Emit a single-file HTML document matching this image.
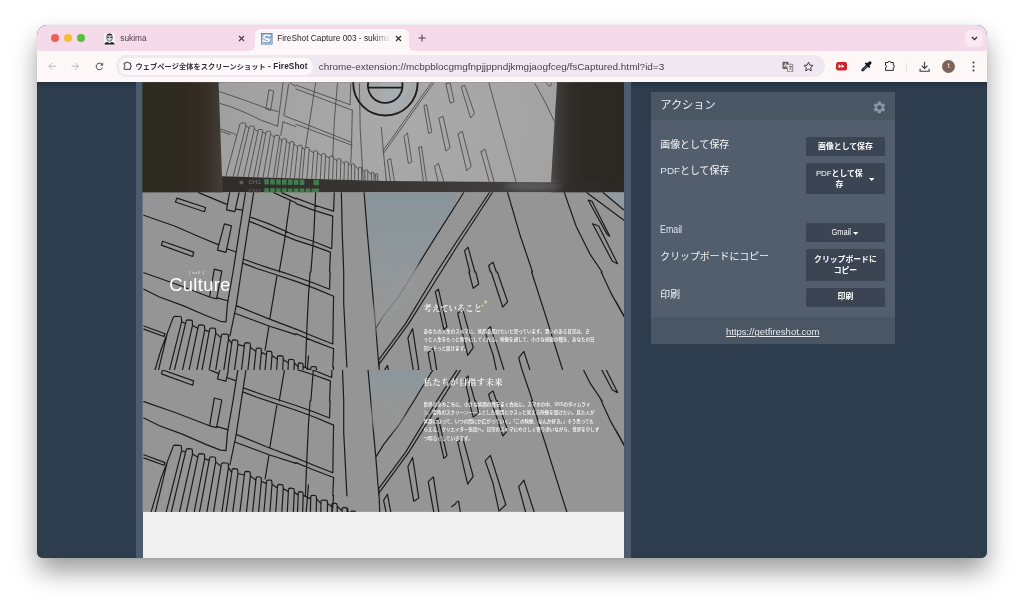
<!DOCTYPE html>
<html lang="ja">
<head>
<meta charset="utf-8">
<title>FireShot Capture 003 - sukima</title>
<style>
*{box-sizing:border-box;margin:0;padding:0}
html,body{width:1024px;height:607px;overflow:hidden;background:#fff;font-family:"Liberation Sans","Noto Sans CJK JP",sans-serif;}
#shadow{position:absolute;left:37px;top:24.5px;width:950px;height:533.5px;border-radius:10px 10px 6px 6px;box-shadow:0 14px 26px -1px rgba(0,0,0,.40),0 0 2px rgba(0,0,0,.10);}
#win{position:absolute;left:37px;top:24.5px;width:950px;height:533.5px;border-radius:10px 10px 6px 6px;background:#2e3d4e;overflow:hidden;}
#pg{position:absolute;left:-37px;top:-24.5px;width:1024px;height:607px;will-change:transform;}
#pg div,#pg span,#pg svg,#pg a{position:absolute;}
#tabs{left:0;top:24.5px;width:1024px;height:26.5px;background:#f5daea;}
#bar{left:0;top:51px;width:1024px;height:31.3px;background:#fdf7f7;}
#content{left:0;top:82.3px;width:1024px;height:476px;background:#2e3d4e;}
.t{white-space:nowrap;line-height:1;}
.lab{font-size:9.9px;color:#f4f5f7;}
.lat{font-weight:400;color:#dfe3e8}
.btn{left:806.3px;width:78.3px;background:#3b4452;border-radius:1.5px}
.bt{left:806.3px;width:78.3px;text-align:center;font-size:7.85px;font-weight:700;color:#fff}
.lat2{font-weight:400;}
.mh{font-family:"Liberation Serif","Noto Serif CJK SC","Noto Serif CJK JP",serif;font-size:8.35px;color:#fff;font-weight:600}
.mp{font-family:"Liberation Sans","Noto Sans CJK JP",sans-serif;font-size:4.52px;line-height:8.5px;color:#fff;white-space:nowrap;font-weight:500}
</style>
</head>
<body>
<div id="shadow"></div>
<div id="win"><div id="pg">
  <div id="tabs"></div>
  <div id="bar"></div>
  <div id="content"></div>
<div style="left:0;top:82.3px;width:1024px;height:7px;background:linear-gradient(rgba(0,0,0,.16),rgba(0,0,0,0))"></div>
  <!-- traffic lights -->
  <div style="left:50.8px;top:34.3px;width:8px;height:8px;border-radius:50%;background:#ee5e56"></div>
  <div style="left:64.2px;top:34.3px;width:8px;height:8px;border-radius:50%;background:#f6bd30"></div>
  <div style="left:77.4px;top:34.3px;width:8px;height:8px;border-radius:50%;background:#58bf3c"></div>
  <!-- tab 1 -->
  <svg style="left:104px;top:32.5px" width="11" height="12" viewBox="0 0 11 12">
    <rect x="0.3" y="0.3" width="10.4" height="11.2" fill="#fbf7f9"/>
    <path d="M2.8 3.2Q2.8 0.9 5.5 0.9Q8.2 0.9 8.2 3.2L8.2 5.6Q8.2 8.3 5.5 8.3Q2.8 8.3 2.8 5.6Z" fill="#d9d9d9" stroke="#333" stroke-width="0.7"/>
    <path d="M2.7 3.1Q2.9 0.8 5.5 0.8Q8.1 0.8 8.3 3.1L8 2.6Q5.5 1.8 3 2.6Z" fill="#222"/>
    <path d="M3.1 4.3H5.1M5.9 4.3H7.9" stroke="#222" stroke-width="1.1"/>
    <path d="M0.3 11.5Q0.5 9.4 3.3 9L5.5 10.2L7.7 9Q10.5 9.4 10.7 11.5Z" fill="#1c1c1c"/>
  </svg>
  <span class="t" style="left:120.3px;top:33.6px;font-size:8.3px;color:#4b3d47;">sukima</span>
  <svg style="left:238px;top:35px" width="7" height="7" viewBox="0 0 7 7"><path d="M1 1L6 6M6 1L1 6" stroke="#4a3c45" stroke-width="1.1" fill="none"/></svg>
  <!-- active tab -->
  <div style="left:255px;top:28.6px;width:154px;height:22.6px;background:#fdf7f7;border-radius:6px 6px 0 0"></div>
  <svg style="left:249px;top:45px" width="6" height="6" viewBox="0 0 6 6"><path d="M6 0V6H0A6 6 0 0 0 6 0Z" fill="#fdf7f7"/></svg>
  <svg style="left:409px;top:45px" width="6" height="6" viewBox="0 0 6 6"><path d="M0 0V6H6A6 6 0 0 1 0 0Z" fill="#fdf7f7"/></svg>
  <svg style="left:261px;top:33px" width="11.5" height="11.5" viewBox="0 0 23 23">
    <defs><linearGradient id="fsg" x1="0" x2="0" y1="0" y2="1"><stop offset="0" stop-color="#8fb0cf"/><stop offset="1" stop-color="#d6e5f1"/></linearGradient></defs>
    <rect x="0.8" y="0.8" width="21.4" height="21.4" fill="url(#fsg)" stroke="#4f7eae" stroke-width="1.6"/>
    <path d="M19.5 6.5C13 3.5 6 4.5 6 8.8C6 13.2 17 11.5 17 15C17 18 9 17.5 3.5 15.5" fill="none" stroke="#3f6f9f" stroke-width="4.2" transform="translate(0.8 1.2)"/>
    <path d="M19.5 6.5C13 3.5 6 4.5 6 8.8C6 13.2 17 11.5 17 15C17 18 9 17.5 3.5 15.5" fill="none" stroke="#fff" stroke-width="3.6"/>
  </svg>
  <span class="t" style="left:277.2px;top:33.6px;font-size:8.3px;color:#2f262b;width:113px;overflow:hidden;-webkit-mask-image:linear-gradient(90deg,#000 86%,transparent 100%);mask-image:linear-gradient(90deg,#000 86%,transparent 100%)">FireShot Capture 003 - sukima</span>
  <svg style="left:395.3px;top:35px" width="7" height="7" viewBox="0 0 7 7"><path d="M1 1L6 6M6 1L1 6" stroke="#2f262b" stroke-width="1.1" fill="none"/></svg>
  <svg style="left:418.3px;top:34.3px" width="8" height="8" viewBox="0 0 8 8"><path d="M4 0.5V7.5M0.5 4H7.5" stroke="#4a4046" stroke-width="1" fill="none"/></svg>
  <!-- tab search chevron -->
  <div style="left:965px;top:29.7px;width:18px;height:17.3px;border-radius:5px;background:#fae9f2"></div>
  <svg style="left:970.5px;top:35.5px" width="7" height="5" viewBox="0 0 7 5"><path d="M1 1L3.5 3.6L6 1" stroke="#2f262b" stroke-width="1.3" fill="none"/></svg>

  <!-- nav -->
  <svg style="left:48px;top:62.2px" width="8.4" height="8.4" viewBox="0 0 16 16"><path d="M15 8H2M8 1.5L1.5 8L8 14.5" stroke="#b7aeb3" stroke-width="1.7" fill="none"/></svg>
  <svg style="left:70.8px;top:62.2px" width="8.4" height="8.4" viewBox="0 0 16 16"><path d="M1 8H14M8 1.5L14.5 8L8 14.5" stroke="#b7aeb3" stroke-width="1.7" fill="none"/></svg>
  <svg style="left:94.6px;top:61.8px" width="9" height="9" viewBox="0 0 18 18"><path d="M15.2 11.2A6.6 6.6 0 1 1 13.6 4.2" stroke="#4a4247" stroke-width="2" fill="none"/><path d="M16.2 1V7H10.2Z" fill="#4a4247"/></svg>
  <!-- omnibox -->
  <div style="left:116.3px;top:55.4px;width:708.4px;height:21.8px;border-radius:10.9px;background:#f1e7f1"></div>
  <div style="left:118.5px;top:57.5px;width:194px;height:17.7px;border-radius:8.9px;background:#fdf8fa"></div>
  <svg style="left:122.7px;top:61.1px" width="9.6" height="9.6" viewBox="0 0 12 12"><path d="M1.5 2.5H4.1Q4.1 1.3 5.4 1.3Q6.7 1.3 6.7 2.5H9.3V5.4Q10.6 5.4 10.6 6.4Q10.6 7.4 9.3 7.4V10.4H1.5V7.6Q2.6 7.5 2.6 6.5Q2.6 5.5 1.5 5.4Z" stroke="#3a3237" stroke-width="1.2" fill="none"/></svg>
  <span class="t" style="left:135.6px;top:61.9px;font-size:7.2px;font-weight:700;color:#33292f;letter-spacing:.07px;" id="chiptxt">ウェブページ全体をスクリーンショット<span style="position:static;font-size:8.3px"> - FireShot</span></span>
  <span class="t" style="left:318.7px;top:62px;font-size:9.95px;color:#4a4046;" id="urltxt">chrome-extension://mcbpblocgmgfnpjjppndjkmgjaogfceg/fsCaptured.html?id=3</span>
  <!-- translate icon -->
  <svg style="left:782px;top:60.5px" width="11.5" height="11.5" viewBox="0 0 23 23">
    <path d="M1 1.5H13V16H1Z" fill="#6b6267"/>
    <path d="M9 6.5H21.5V21.5H11.5Z" fill="#fdf7f7" stroke="#6b6267" stroke-width="1.6"/>
    <path d="M4 12L7 4.5L10 12M5 9.8H9" stroke="#fdf7f7" stroke-width="1.5" fill="none"/>
    <path d="M13.5 11H20M16.7 9.5V11M18.8 11C18 14.5 15.5 17 13.5 18M14.8 13C15.5 15 17.5 17 19.8 18" stroke="#4a4247" stroke-width="1.3" fill="none"/>
  </svg>
  <svg style="left:803.2px;top:60.8px" width="11" height="11" viewBox="0 0 22 22"><path d="M11 2.2L13.6 8.3L20.2 8.9L15.2 13.2L16.7 19.7L11 16.3L5.3 19.7L6.8 13.2L1.8 8.9L8.4 8.3Z" stroke="#3d353a" stroke-width="1.9" fill="none" stroke-linejoin="round"/></svg>
  <!-- extension icons -->
  <svg style="left:836.2px;top:62.3px" width="11.2" height="8.6" viewBox="0 0 22 17"><rect x="0" y="0" width="22" height="17" rx="4.5" fill="#c9252b"/><path d="M5 4.5L10.5 8.5L5 12.5ZM11 4.5L16.5 8.5L11 12.5Z" fill="#fff"/></svg>
  <svg style="left:860px;top:60px" width="13" height="13" viewBox="860 60 13 13"><path d="M862.7 70.1L867.6 65.2" stroke="#1d2233" stroke-width="2.8" stroke-linecap="round"/><path d="M863.5 69.3L866.4 66.4" stroke="#8f95aa" stroke-width=".8" stroke-linecap="round"/><path d="M865.9 63.5L869.3 66.9" stroke="#15161c" stroke-width="1.8" stroke-linecap="round"/><path d="M868.3 64.5L869.9 62.9" stroke="#15161c" stroke-width="3.3" stroke-linecap="round"/></svg>
  <svg style="left:884px;top:60px" width="12" height="12" viewBox="0 0 12 12"><path d="M1.5 2.5H4.1Q4.1 1.3 5.4 1.3Q6.7 1.3 6.7 2.5H9.3V5.4Q10.6 5.4 10.6 6.4Q10.6 7.4 9.3 7.4V10.4H1.5V7.6Q2.6 7.5 2.6 6.5Q2.6 5.5 1.5 5.4Z" stroke="#2f282c" stroke-width="1" fill="none"/></svg>
  <div style="left:906.3px;top:62.5px;width:1px;height:8.5px;background:#ecdfe4"></div>
  <svg style="left:919.4px;top:60.6px" width="11.2" height="11.6" viewBox="0 0 22 23"><path d="M11 1.5V14.5M5.2 9L11 14.8L16.8 9" stroke="#3d353a" stroke-width="2.1" fill="none"/><path d="M2 15.5V20.5H20V15.5" stroke="#3d353a" stroke-width="2.1" fill="none"/></svg>
  <div style="left:942px;top:59.9px;width:13.2px;height:13.2px;border-radius:50%;background:#7c6459"></div>
  <span class="t" style="left:942px;top:61.8px;width:13.2px;text-align:center;font-size:8px;color:#efe3dc;">t</span>
  <svg style="left:971.5px;top:61px" width="3" height="11" viewBox="0 0 3 11"><circle cx="1.5" cy="1.5" r="1" fill="#3d353a"/><circle cx="1.5" cy="5.5" r="1" fill="#3d353a"/><circle cx="1.5" cy="9.5" r="1" fill="#3d353a"/></svg>

  <!-- captured screenshot frame -->
  <div style="left:135.5px;top:82.3px;width:495.5px;height:476px;background:#4c5b6f"></div>
  <div style="left:142.6px;top:82.3px;width:481.4px;height:476px;background:#f0f0f0"></div>
  <svg style="left:0;top:0" width="1024" height="607" viewBox="0 0 1024 607">
    <defs>
      <linearGradient id="gl" x1="0" x2="1" y1="0" y2="0"><stop offset="0" stop-color="#2c2a1f"/><stop offset=".5" stop-color="#2e2a21"/><stop offset=".78" stop-color="#352c26"/><stop offset="1" stop-color="#423e39"/></linearGradient>
      <linearGradient id="gr" x1="0" x2="1" y1="0" y2="0"><stop offset="0" stop-color="#4c4947"/><stop offset=".1" stop-color="#3d3a37"/><stop offset=".28" stop-color="#302d29"/><stop offset=".55" stop-color="#2c2925"/><stop offset="1" stop-color="#2b2824"/></linearGradient>
      <linearGradient id="gr2" x1="0" x2="1" y1="0" y2="0"><stop offset="0" stop-color="#3b3938"/><stop offset=".2" stop-color="#302d2a"/><stop offset="1" stop-color="#2b2824"/></linearGradient>
      <linearGradient id="gb" x1="0" x2="1" y1="0" y2="0"><stop offset="0" stop-color="#2c2923"/><stop offset=".2" stop-color="#2f2d2b"/><stop offset=".5" stop-color="#383534"/><stop offset=".8" stop-color="#403f3f"/><stop offset=".848" stop-color="#3b3938"/><stop offset="1" stop-color="#2e2b28"/></linearGradient>
      <linearGradient id="sky" x1="0" x2="0" y1="192" y2="312" gradientUnits="userSpaceOnUse"><stop offset="0" stop-color="#89949a"/><stop offset=".35" stop-color="#8c969b"/><stop offset=".65" stop-color="#91979a"/><stop offset=".85" stop-color="#949697"/><stop offset="1" stop-color="#959595"/></linearGradient>
      <linearGradient id="sky2" x1="0" x2="0" y1="370" y2="406" gradientUnits="userSpaceOnUse"><stop offset="0" stop-color="#8c969b"/><stop offset=".35" stop-color="#8f989c"/><stop offset="1" stop-color="#959595"/></linearGradient>
      <radialGradient id="tvl" cx="410" cy="120" r="190" gradientUnits="userSpaceOnUse"><stop offset="0" stop-color="#fff" stop-opacity=".1"/><stop offset=".6" stop-color="#fff" stop-opacity=".05"/><stop offset="1" stop-color="#fff" stop-opacity="0"/></radialGradient>
      <filter id="fog" x="-50%" y="-50%" width="200%" height="200%"><feGaussianBlur stdDeviation="3"/></filter>
      <clipPath id="cs"><path d="M218.6 82.3H557L551 182.2L386 181L222 176.2Z"/></clipPath>
      <clipPath id="c1"><rect x="142.6" y="192.3" width="481.4" height="177.6"/></clipPath>
      <clipPath id="c2"><rect x="142.6" y="369.9" width="481.4" height="142"/></clipPath>
    </defs>
    <!-- lower gray drawing area -->
    <rect x="142.6" y="192.3" width="481.4" height="319.6" fill="#959595"/>
    <!-- tv dark surround -->
    <rect x="142.6" y="82.3" width="481.4" height="110" fill="url(#gb)"/>
    <rect x="142.6" y="82.3" width="80" height="110" fill="url(#gl)"/>
    <path d="M557 82.3L551 182.2H624V82.3Z" fill="url(#gr)"/><rect x="551" y="182.2" width="73" height="10.1" fill="url(#gr2)"/>
    <clipPath id="cb"><rect x="142.6" y="82.3" width="481.4" height="110"/></clipPath>
    <g clip-path="url(#cb)"><ellipse cx="533" cy="186" rx="30" ry="3.5" fill="#8c8c8c" opacity=".5" filter="url(#fog)"/></g>
    <!-- tv screen -->
    <path d="M218.6 82.3H557L551 182.2L386 181L222 176.2Z" fill="#a0a0a0"/>
    <!-- channel indicators -->
    <g fill="#417d4c">
      <rect x="264.3" y="179.2" width="4.6" height="5.2"/><rect x="270.2" y="179.2" width="4.6" height="5.3"/><rect x="276.1" y="179.3" width="4.6" height="5.3"/><rect x="282" y="179.4" width="4.6" height="5.3"/><rect x="287.9" y="179.5" width="4.6" height="5.3"/><rect x="293.8" y="179.6" width="4.6" height="5.3"/><rect x="299.7" y="179.7" width="4.6" height="5.3"/><rect x="313.4" y="179.9" width="5.6" height="5.3"/>
      <rect x="264.3" y="188.2" width="4.6" height="4.1"/><rect x="270.2" y="188.2" width="4.6" height="4.1"/><rect x="276.1" y="188.3" width="4.6" height="4"/><rect x="282" y="188.3" width="4.6" height="4"/><rect x="287.9" y="188.4" width="4.6" height="3.9"/><rect x="293.8" y="188.4" width="4.6" height="3.9"/><rect x="299.7" y="188.5" width="4.6" height="3.8"/><rect x="305.6" y="188.5" width="4.6" height="3.8"/><rect x="311.5" y="188.6" width="7.5" height="3.7"/>
    </g>
    <circle cx="241.5" cy="182.5" r="2" fill="#5f5c58"/>
    <text x="248.6" y="184.3" font-family="Liberation Sans, sans-serif" font-size="6.2" fill="#7b7871">CH1</text>
    <text x="248.6" y="192.6" font-family="Liberation Sans, sans-serif" font-size="6.2" fill="#66635d">CH2</text>
<g clip-path="url(#cs)">
<rect x="218" y="82" width="340" height="101" fill="url(#tvl)"/>
<path d="M380 82.3H411L404 100L392 114L381 106Z" fill="#a7b1b8" opacity=".55"/>
<g fill="none" stroke="#484848" stroke-width=".85" stroke-linejoin="round" stroke-linecap="round"><path d="M 218.9 91.4 L 245.5 100.5 L 266.7 108.3 L 278.1 111.7 M 269.3 89.8 L 273.7 91.1 L 270.6 110.5 L 266.2 108.9 Z M 218.9 103.1 L 231.5 107.0 L 248.7 114.1 L 261.2 120.3 L 277.6 126.1 M 283.1 82.8 L 280.8 100.8 L 277.6 126.1 M 288.6 84.3 L 286.2 100.8 L 283.9 115.6 L 295.9 120.3 M 290.1 82.8 L 295.9 86.7 M 283.1 121.9 L 280.8 135.2 M 283.1 121.9 L 295.9 126.6 M 219.7 128.6 L 233.8 133.6 L 236.2 135.2 M 219.7 130.8 L 229.9 134.6 M 296.0 85.1 L 350.0 104.7 M 296.0 89.0 L 352.3 110.2 M 296.0 120.3 L 351.6 142.3 M 296.0 124.3 L 352.3 145.4 M 315.6 82.8 L 310.9 113.3 L 305.4 147.7 M 337.5 82.8 L 334.3 121.1 L 332.8 157.1 M 350.8 83.6 L 350.0 104.7 M 352.3 110.2 L 351.6 142.3 L 350.8 163.4 M 359.4 83.6 L 360.2 128.9 L 362.5 169.6 L 363.6 185.3 M 381.3 127.4 L 383.6 154.0 L 386.0 177.0 L 386.6 185.3 M 433.7 82.8 L 383.6 153.2 M 431.4 82.8 L 382.9 150.9 M 446.2 83.6 L 450.1 82.8 L 454.1 101.6 L 450.6 103.1 Z M 424.3 105.5 L 426.7 104.7 L 431.8 132.1 L 429.0 133.3 Z M 439.2 118.0 L 443.1 116.4 L 450.1 147.7 L 446.2 150.9 Z M 404.3 136.0 L 407.4 132.9 L 411.8 161.8 L 408.7 163.4 Z M 418.8 147.7 L 421.5 146.2 L 427.1 185.3 M 418.8 147.7 L 423.9 185.3 M 387.5 160.2 L 390.7 158.7 L 395.2 185.3 M 387.5 160.2 L 391.0 185.3 M 434.5 166.5 L 438.4 163.4 L 445.0 185.3 M 434.5 166.5 L 439.0 185.3 M 461.5 86.7 L 464.6 85.1 L 474.5 113.3 L 470.9 117.7 Z M 458.3 133.6 L 462.3 131.3 L 471.3 166.5 L 467.0 170.4 Z M 481.0 151.6 L 485.0 149.3 L 495.1 185.3 M 481.0 151.6 L 490.3 185.3 M 488.9 82.8 L 501.4 128.9 L 514.7 177.0 L 517.0 185.3 M 535.0 83.6 L 545.2 102.3 L 555.4 123.5 M 546.0 82.8 L 549.9 86.7 L 551.5 83.6 M223.7 184.0 L240.0 123.8 Q240.2 123.0 241.0 123.0 L245.0 123.0 Q245.8 123.0 245.8 123.8 L245.9 126.0 L231.3 184.0 M245.9 126.0 L249.0 128.1 M235.7 184.0 L249.3 126.9 Q249.5 126.1 250.3 126.1 L253.4 126.1 Q254.2 126.1 254.2 126.9 L254.3 129.0 L241.9 184.0 M254.3 129.0 L258.0 131.5 M246.9 184.0 L258.3 130.3 Q258.4 129.5 259.2 129.5 L261.7 129.5 Q262.5 129.5 262.5 130.3 L262.6 132.3 L252.3 184.0 M262.6 132.3 L265.9 133.3 M256.4 184.0 L266.1 132.1 Q266.3 131.3 267.1 131.3 L269.7 131.3 Q270.5 131.3 270.5 132.1 L270.6 134.0 L261.9 184.0 M270.6 134.0 L274.3 137.4 M266.7 184.0 L274.5 136.2 Q274.6 135.4 275.4 135.4 L278.5 135.4 Q279.3 135.4 279.3 136.2 L279.4 138.0 L272.4 184.0 M279.4 138.0 L281.8 140.8 M275.6 184.0 L282.0 139.6 Q282.1 138.8 282.9 138.8 L285.6 138.8 Q286.4 138.8 286.4 139.6 L286.5 141.3 L280.8 184.0 M286.5 141.3 L289.8 143.6 M284.8 184.0 L290.0 142.4 Q290.1 141.6 290.9 141.6 L293.0 141.6 Q293.8 141.6 293.8 142.4 L293.9 144.0 L289.3 184.0 M293.9 144.0 L297.7 147.3 M293.8 184.0 L297.8 146.1 Q297.9 145.3 298.7 145.3 L301.2 145.3 Q302.0 145.3 302.0 146.1 L302.1 147.6 L298.6 184.0 M302.1 147.6 L304.8 149.5 M301.7 184.0 L304.9 148.3 Q305.0 147.5 305.8 147.5 L308.3 147.5 Q309.1 147.5 309.1 148.3 L309.2 149.7 L306.4 184.0 M309.2 149.7 L313.6 152.9 M311.3 184.0 L313.7 151.7 Q313.7 150.9 314.5 150.9 L316.7 150.9 Q317.5 150.9 317.5 151.7 L317.6 153.0 L315.5 184.0 M317.6 153.0 L321.6 155.7 M320.0 184.0 L321.7 154.5 Q321.7 153.7 322.5 153.7 L324.7 153.7 Q325.5 153.7 325.5 154.5 L325.6 155.7 L324.1 184.0 M325.6 155.7 L329.5 158.1 M328.3 184.0 L329.5 156.9 Q329.6 156.1 330.4 156.1 L332.5 156.1 Q333.3 156.1 333.3 156.9 L333.4 158.0 L332.4 184.0 M333.4 158.0 L336.9 160.7 M336.2 184.0 L337.0 159.5 Q337.0 158.7 337.8 158.7 L339.9 158.7 Q340.7 158.7 340.7 159.5 L340.8 160.5 L340.2 184.0 M340.8 160.5 L344.4 163.7 M343.9 184.0 L344.4 162.5 Q344.4 161.7 345.2 161.7 L347.4 161.7 Q348.2 161.7 348.2 162.5 L348.3 163.4 L347.9 184.0 M348.3 163.4 L351.5 165.9 M351.2 184.0 L351.5 164.7 Q351.5 163.9 352.3 163.9 L353.9 163.9 Q354.7 163.9 354.7 164.7 L354.8 165.5 L354.6 184.0 M354.8 165.5 L358.4 169.3 M358.3 184.0 L358.4 168.1 Q358.4 167.3 359.2 167.3 L360.8 167.3 Q361.6 167.3 361.6 168.1 L361.7 168.8 L361.6 184.0 M361.7 168.8 L364.9 171.9 M364.9 184.0 L364.9 170.7 Q364.9 169.9 365.7 169.9 L366.9 169.9 Q367.7 169.9 367.7 170.7 L367.8 171.3 L367.8 184.0 M367.8 171.3 L371.4 174.3 M371.4 184.0 L371.4 173.1 Q371.4 172.3 372.2 172.3 L373.1 172.3 Q373.9 172.3 373.9 173.1 L374.0 173.6 L374.0 184.0 M374.0 173.6 L375.7 175.6 M375.7 184.0 L375.7 174.4 Q375.7 173.6 376.5 173.6 L376.8 173.6 Q377.6 173.6 377.6 174.4 L377.7 174.8 L377.8 184.0"/></g>
<g fill="none" stroke="#1c1c1c" stroke-width="1.8"><circle cx="385.4" cy="83.3" r="32.2"/><circle cx="385.2" cy="85.6" r="17.3"/><path d="M368.2 87.6H402.2"/></g>
</g>
<defs><g id="s1">
<g fill="none" stroke="#1b1b1b" stroke-width="1.2" stroke-linejoin="round" stroke-linecap="round"><path d="M 198.6 192.6 L 226.8 204.4 M 229.6 192.6 L 226.5 209.9 L 234.9 211.7 L 239.0 192.6 M 236.2 209.1 L 242.4 210.2 M 177.0 198.1 L 205.6 207.5 L 204.5 211.7 L 175.4 202.0 Z M 143.8 215.3 L 175.1 226.3 L 198.6 236.5 L 218.2 244.6 M 224.4 223.9 L 231.5 225.8 L 226.0 252.4 L 217.4 250.2 Z M 227.5 249.0 L 235.4 251.8 M 162.6 241.2 L 193.6 252.1 L 192.7 256.5 L 161.4 245.1 Z M 245.5 192.6 L 239.3 231.8 L 233.0 272.0 M 253.7 192.6 L 247.9 228.6 L 242.4 264.6 L 241.2 272.0 M 251.0 217.4 L 269.0 223.9 L 295.9 235.7 M 250.2 221.6 L 269.0 229.4 L 295.9 240.4 M 290.1 200.5 L 284.7 239.6 L 279.2 272.0 M 273.7 192.6 L 295.9 202.8 M 281.5 192.6 L 295.9 198.9 M 315.6 192.6 L 314.0 231.8 L 310.9 272.0 M 334.3 192.6 L 333.6 211.1 M 296.0 198.1 L 314.8 205.2 L 333.6 211.1 M 296.0 203.6 L 314.8 210.6 L 332.8 216.1 M 332.8 216.1 L 331.7 248.7 M 296.0 235.7 L 313.2 241.2 L 331.7 248.7 M 296.0 240.4 L 313.2 245.9 L 330.4 252.1 M 330.4 252.1 L 329.6 272.0 M 341.4 192.6 L 342.2 231.8 L 343.7 272.0 M 364.1 192.6 L 367.2 231.8 L 370.8 272.0 M 507.6 192.5 L 519.6 233.7 L 532.5 272.0 M 564.3 192.5 L 576.3 226.8 L 590.1 254.3 L 602.1 272.0 M 586.6 192.5 L 623.6 220.0 M 603.0 192.5 L 623.6 209.7 M 588.3 200.2 L 591.8 201.1 L 609.8 236.3 L 607.3 234.6 Z M 592.6 223.8 L 598.7 226.0 L 617.6 263.8 L 612.4 261.2 Z M 464.6 250.9 L 468.0 247.1 L 474.9 272.0 M 464.6 250.9 L 469.8 272.0 M 488.7 265.5 L 493.0 262.1 L 496.4 272.0 M 488.7 265.5 L 490.4 272.0 M 143.8 272.8 L 175.1 283.7 L 209.6 297.0 M 143.8 289.2 L 159.5 297.0 L 182.9 305.6 L 206.4 315.8 L 220.5 321.3 L 226.0 321.8 L 227.5 303.3 L 233.0 272.0 M 217.4 297.8 L 228.3 301.0 M 241.2 272.0 L 236.2 305.6 L 229.9 336.2 M 236.2 305.6 L 269.0 318.9 L 295.9 329.1 M 235.4 313.5 L 269.0 326.0 L 295.9 334.6 M 276.8 276.7 L 269.8 318.9 M 269.0 326.0 L 265.1 350.2 M 143.8 326.0 L 165.0 333.8 L 163.9 336.5 L 143.8 329.1 M 310.1 272.0 L 308.5 295.5 L 307.0 326.8 L 305.4 367.0 M 296.0 276.7 L 311.6 282.2 L 329.6 289.2 M 296.0 281.4 L 314.8 288.4 L 333.6 296.3 M 330.1 272.0 L 329.6 289.2 M 333.6 296.3 L 333.2 318.9 L 332.8 344.0 M 296.0 329.1 L 313.2 336.2 L 332.8 344.0 M 296.0 333.8 L 313.2 340.9 L 333.6 348.7 M 333.6 348.7 L 332.8 367.0 M 343.7 272.0 L 343.7 303.3 L 345.3 334.6 L 346.9 367.0 M 370.8 272.0 L 373.5 303.3 L 375.8 328.3 L 378.9 367.0 M 435.3 291.6 L 438.4 289.2 L 447.0 326.8 L 443.9 329.6 Z M 468.9 272.0 L 473.2 288.3 L 478.7 284.0 L 475.8 272.0 M 491.2 272.0 L 502.8 307.2 L 507.6 301.6 L 497.3 272.0 M 457.7 313.3 L 462.9 309.8 L 473.2 347.6 L 467.7 355.4 Z M 531.6 272.0 L 545.4 315.0 L 561.7 367.0 M 601.2 272.0 L 610.7 292.6 L 624.1 316.7 M243.9 259.3 L257 264 L270 268.4 L283 272.4 L296 276.7 M242.7 263.1 L256 268.2 L270 272.8 L296 281.4 M214.3 269.2 L221.8 271.2 L216.6 298.9 L209.6 297 Z M489.5 192.5 L456 242.5 L436.8 272 L405.5 323.6 L378.9 359.6 M492.4 192.5 L456 248 L441 272 L408.7 323.6 L378.9 364.3 M463.7 192.5 L456 204.8 L436.8 234.9 L421.2 259.9 L414.9 270.5 L399.3 295.5 L383.6 315.8 L375.8 328.3 M 308.5 356.0 L 306.2 382.9 M 333.6 366.9 L 332.3 382.9 M 347.6 379.4 L 348.0 382.9 M 378.9 360.7 L 379.7 382.9 M 407.9 338.0 L 412.6 328.6 L 418.8 369.3 L 413.7 372.4 Z M 428.2 352.8 L 433.4 348.1 L 438.7 382.9 M 428.2 352.8 L 433.7 382.9 M 383.6 371.6 L 387.5 365.4 L 390.7 382.9 M 383.6 371.6 L 386.0 382.9 M 451.7 377.9 L 455.9 374.8 M 485.2 332.1 L 490.4 326.6 L 498.1 351.0 L 505.8 376.0 L 499.0 382.3 L 493.0 354.5 Z M 518.7 357.9 L 523.9 351.4 L 534.2 383.2 M 518.7 357.9 L 525.6 383.2 M 456.0 373.4 L 458.6 372.5 L 460.3 383.2 M 615.8 301.2 L 624.1 315.8 M561.7 367.0 L566.9 383.2 M150.9 383.7 L160.9 350.0 L173.2 317.6 Q173.6 316.3 174.8 316.3 L180.2 316.5 Q181.4 316.5 181.4 317.7 L181.6 321.9 L166.1 383.7 M181.6 321.9 L185.6 323.5 M171.2 383.7 L178.8 351.8 L186.1 321.2 Q186.4 319.9 187.6 319.9 L191.1 320.1 Q192.3 320.1 192.3 321.3 L192.5 325.3 L179.4 383.7 M192.5 325.3 L197.9 328.5 M186.2 383.7 L192.4 354.3 L198.3 326.2 Q198.6 324.9 199.8 324.9 L203.3 325.1 Q204.5 325.1 204.5 326.3 L204.7 330.1 L194.1 383.7 M204.7 330.1 L209.2 331.6 M199.4 383.7 L204.7 355.9 L209.6 329.3 Q209.9 328.0 211.1 328.0 L214.3 328.2 Q215.5 328.2 215.5 329.4 L215.7 333.1 L206.8 383.7 M215.7 333.1 L221.0 337.6 M213.5 383.7 L217.5 358.9 L221.4 335.3 Q221.6 334.0 222.8 334.0 L227.1 334.2 Q228.3 334.2 228.3 335.4 L228.5 338.9 L221.8 383.7 M228.5 338.9 L231.7 343.5 M226.0 383.7 L229.1 361.9 L232.1 341.2 Q232.2 339.9 233.4 339.9 L236.5 340.1 Q237.7 340.1 237.7 341.3 L237.9 344.7 L232.7 383.7 M237.9 344.7 L244.3 346.2 M239.8 383.7 L242.3 363.2 L244.6 343.9 Q244.8 342.6 246.0 342.6 L249.0 342.8 Q250.2 342.8 250.2 344.0 L250.4 347.1 L246.4 383.7 M250.4 347.1 L255.8 351.6 M252.6 383.7 L254.4 365.9 L256.1 349.3 Q256.2 348.0 257.4 348.0 L260.0 348.2 Q261.2 348.2 261.2 349.4 L261.4 352.4 L258.5 383.7 M261.4 352.4 L266.4 354.8 M263.9 383.7 L265.3 367.5 L266.6 352.5 Q266.7 351.2 267.9 351.2 L270.6 351.4 Q271.8 351.4 271.8 352.6 L272.0 355.4 L269.9 383.7 M272.0 355.4 L277.4 359.2 M275.7 383.7 L276.7 369.7 L277.5 356.9 Q277.6 355.6 278.8 355.6 L281.9 355.8 Q283.1 355.8 283.1 357.0 L283.3 359.6 L281.8 383.7 M283.3 359.6 L288.4 362.9 M287.3 383.7 L287.9 371.6 L288.5 360.6 Q288.6 359.3 289.8 359.3 L292.9 359.5 Q294.1 359.5 294.1 360.7 L294.3 363.2 L293.3 383.7 M294.3 363.2 L298.2 366.5 M297.5 383.7 L297.9 373.4 L298.3 364.2 Q298.3 362.9 299.5 362.9 L301.8 363.1 Q303.0 363.1 303.0 364.3 L303.2 366.6 L302.6 383.7 M303.2 366.6 L310.8 370.1 M310.4 383.7 L310.6 375.2 L310.8 367.8 Q310.9 366.5 312.1 366.5 L315.1 366.7 Q316.3 366.7 316.3 367.9 L316.5 370.1 L316.2 383.7 M316.5 370.1 L321.0 374.8 M320.8 383.7 L320.9 377.5 L321.0 372.5 Q321.0 371.2 322.2 371.2 L326.1 371.4 Q327.3 371.4 327.3 372.6 L327.5 374.6 L327.4 383.7 M327.5 374.6 L332.0 377.9 M331.9 383.7 L331.9 379.1 L332.0 375.6 Q332.0 374.3 333.2 374.3 L335.8 374.5 Q337.0 374.5 337.0 375.7 L337.2 377.5 L337.2 383.7 M337.2 377.5 L342.2 382.2 M342.1 383.7 L342.2 381.2 L342.2 379.9 Q342.2 378.6 343.4 378.6 L345.7 378.8 Q346.9 378.8 346.9 380.0 L347.1 381.6 L347.1 383.7 M347.1 381.6 L350.8 385.8 M350.8 383.7 L350.8 383.0 L350.8 383.5 Q350.8 382.2 352.0 382.2 L354.3 382.4 Q355.5 382.4 355.5 383.6 L355.7 385.0 L355.7 383.7 M167.0 334.5 L155.2 383.7"/></g>
</g></defs>
<g clip-path="url(#c1)"><path d="M364.1 192.3H456V205.2L421.2 260L410 282L375.8 328.3L373.5 303.3L370.8 272L367.2 231.8Z" fill="url(#sky)"/><path d="M603 192.3H624V208.5Z" fill="#929b9f"/><use href="#s1"/><ellipse cx="399" cy="294" rx="9" ry="36" transform="rotate(33 399 294)" fill="#979899" opacity=".8" filter="url(#fog)"/><ellipse cx="374.5" cy="318" rx="4" ry="16" fill="#969696" opacity=".7" filter="url(#fog)"/></g>
<g clip-path="url(#c2)"><path d="M368.6 369.9H433L420 390L408.5 408H371.5Z" fill="url(#sky2)"/><use href="#s1" transform="translate(0 128.8)"/><ellipse cx="386" cy="416" rx="17" ry="15" fill="#969696" opacity=".75" filter="url(#fog)"/></g>
  </svg>
  <!-- page text -->
  <span class="t" style="left:189.2px;top:271.7px;font-size:3.4px;color:#eee;letter-spacing:.75px">[ null ]</span>
  <span class="t" style="left:169.3px;top:276px;font-size:18.3px;color:#fff;letter-spacing:.35px" id="culture">Culture</span>
  <span class="t mh" style="left:423.6px;top:304.5px;" id="h1">考えていること</span>
  <svg style="left:481px;top:298.5px" width="7" height="9" viewBox="0 0 7 9"><path d="M4.6 0.5L5.2 2.3L6.8 2.9L5.2 3.5L4.6 5.3L4 3.5L2.4 2.9L4 2.3Z" fill="#dfe59a"/><path d="M1.5 5.2L1.9 6.3L3 6.7L1.9 7.1L1.5 8.2L1.1 7.1L0 6.7L1.1 6.3Z" fill="#dfe59a"/></svg>
  <div class="mp" style="left:423.6px;top:327.8px;">あなたの人生のスキマに、笑顔を届けたいと思っています。潤いのある日常は、き<br>っと人生をもっと豊かにしてくれる。映像を通して、小さな感動の種を、あなたの日<br>常にそっと届けます。</div>
  <span class="t mh" style="left:423.6px;top:378.8px;letter-spacing:.5px" id="h2">私たちが目指す未来</span>
  <div class="mp" style="left:423.6px;top:400.8px;">世界のあちこちに、小さな笑顔の種をまく会社に。スマホの中、SNSのタイムライ<br>ン、街角のスクリーン――ふとした瞬間にクスッと笑える映像を届けたい。見た人が<br>笑顔になって、いつの間にか広がっていく。「この映像、なんか好き。」そう思っても<br>らえる、クリエイター集団へ。日常のスキマにやさしく寄り添いながら、世界を少しず<br>つ明るくしていきます。</div>

  <!-- action panel -->
  <div style="left:650.8px;top:92.3px;width:243.8px;height:252.2px;background:#525e6e"></div>
  <div style="left:650.8px;top:92.3px;width:243.8px;height:28.1px;background:#4b5665"></div>
  <div style="left:650.8px;top:316.7px;width:243.8px;height:27.8px;background:#4b5665"></div>
  <span class="t" style="left:660.3px;top:99.8px;font-size:11.2px;color:#f2f3f5;">アクション</span>
  <svg style="left:871.7px;top:99.8px" width="14.8" height="14.8" viewBox="0 0 24 24"><path fill="#8a94a2" d="M19.14 12.94c.04-.3.06-.61.06-.94 0-.32-.02-.64-.07-.94l2.03-1.58a.49.49 0 0 0 .12-.61l-1.92-3.32a.488.488 0 0 0-.59-.22l-2.39.96c-.5-.38-1.03-.7-1.62-.94l-.36-2.54a.484.484 0 0 0-.48-.41h-3.84c-.24 0-.43.17-.47.41l-.36 2.54c-.59.24-1.13.57-1.62.94l-2.39-.96c-.22-.08-.47 0-.59.22L2.74 8.87c-.12.21-.08.47.12.61l2.03 1.58c-.05.3-.09.63-.09.94s.02.64.07.94l-2.03 1.58a.49.49 0 0 0-.12.61l1.92 3.32c.12.22.37.29.59.22l2.39-.96c.5.38 1.03.7 1.62.94l.36 2.54c.05.24.24.41.48.41h3.84c.24 0 .44-.17.47-.41l.36-2.54c.59-.24 1.13-.56 1.62-.94l2.39.96c.22.08.47 0 .59-.22l1.92-3.32c.12-.22.07-.47-.12-.61l-2.01-1.58zM12 15.6c-1.98 0-3.600-1.620-3.600-3.600s1.620-3.600 3.600-3.600 3.600 1.620 3.600 3.600-1.620 3.600-3.600 3.600z"/></svg>
  <span class="t lab" style="left:660.3px;top:140.2px;">画像として保存</span>
  <span class="t lab" style="left:660.3px;top:165.6px;"><span class="lat" style="position:static">PDF</span>として保存</span>
  <span class="t lab" style="left:660.3px;top:224.6px;font-size:10.4px;transform:scaleX(.85);transform-origin:0 50%"><span class="lat" style="position:static;">Email</span></span>
  <span class="t lab" style="left:660.3px;top:251.7px;">クリップボードにコピー</span>
  <span class="t lab" style="left:660.3px;top:290.3px;">印刷</span>
  <div class="btn" style="top:137.4px;height:18.4px;"></div>
  <span class="t bt" style="top:142.6px;">画像として保存</span>
  <div class="btn" style="top:163.4px;height:30.9px;"></div>
  <span class="t bt" style="top:169.6px;left:806.3px;width:66px"><span class="lat2" style="position:static">PDF</span>として保</span>
  <span class="t bt" style="top:180.6px;left:806.3px;width:66px">存</span>
  <svg style="left:869px;top:178.4px" width="5.4" height="3" viewBox="0 0 54 30"><path d="M0 0H54L27 30Z" fill="#fff"/></svg>
  <div class="btn" style="top:223.1px;height:19.3px;"></div>
  <span class="t bt" style="top:228.2px;font-weight:400;font-size:8.7px;left:806.3px;width:70.5px;transform:scaleX(.86)">Gmail</span>
  <svg style="left:853.2px;top:231.6px" width="5.4" height="3" viewBox="0 0 54 30"><path d="M0 0H54L27 30Z" fill="#fff"/></svg>
  <div class="btn" style="top:249px;height:31.8px;"></div>
  <span class="t bt" style="top:255.5px;">クリップボードに</span>
  <span class="t bt" style="top:266.5px;">コピー</span>
  <div class="btn" style="top:287.6px;height:19.3px;"></div>
  <span class="t bt" style="top:293.3px;">印刷</span>
  <span class="t" style="left:650.8px;width:243.8px;text-align:center;top:327.2px;font-size:9.5px;color:#e6e8eb;text-decoration:underline;text-underline-offset:1px;letter-spacing:0px">https://getfireshot.com</span>

</div></div>
</body>
</html>
